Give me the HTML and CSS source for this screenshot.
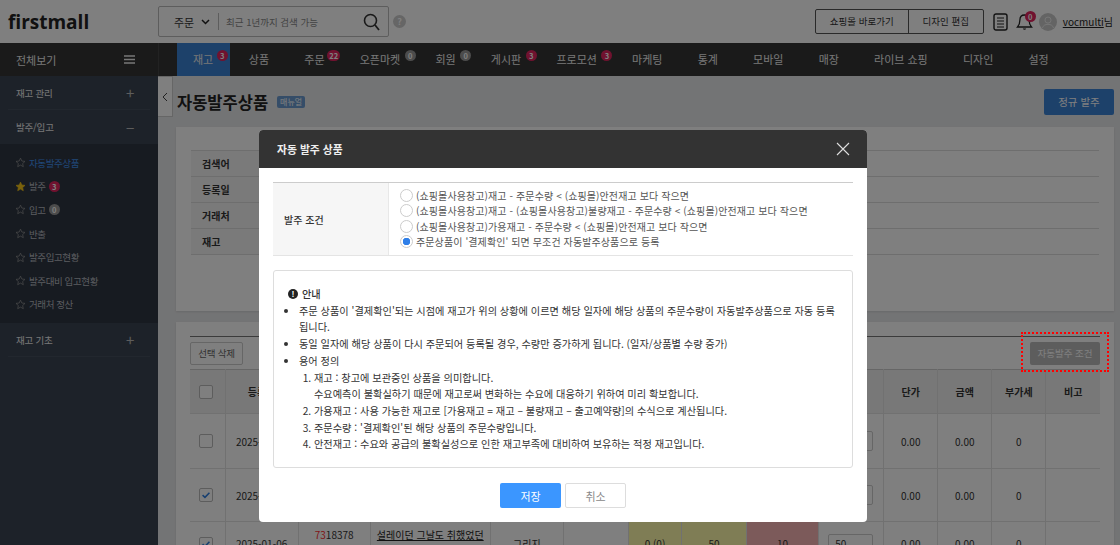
FILE: index.html
```html
<!DOCTYPE html>
<html lang="ko">
<head>
  <meta charset="utf-8">
  <title>자동발주상품</title>
  <link rel="stylesheet" href="styles.css">
</head>
<body>
  <svg class="defs" width="0" height="0">
    <symbol id="star" viewBox="0 0 24 24">
      <path d="M12 2.5l2.9 6.3 6.9.8-5.1 4.7 1.4 6.8-6.1-3.4-6.1 3.4 1.4-6.8-5.1-4.7 6.9-.8z"/>
    </symbol>
    <symbol id="tick" viewBox="0 0 14 14">
      <path d="M3 7.2l2.8 2.6L11 4.4" fill="none" stroke-width="1.8"/>
    </symbol>
  </svg>

  <div class="page">
    <header class="topbar">
      <a class="logo">firstmall</a>
      <div class="search">
        <span class="search-type">주문
          <svg width="9" height="6" viewBox="0 0 9 6"><path d="M1 1l3.5 3.5L8 1" fill="none" stroke="#222" stroke-width="1.5"/></svg>
        </span>
        <span class="search-text">최근 1년까지 검색 가능</span>
        <svg class="search-icon" width="17" height="18" viewBox="0 0 17 18"><circle cx="7.5" cy="7.5" r="6" fill="none" stroke="#333" stroke-width="1.6"/><path d="M12 12l4 5" stroke="#333" stroke-width="1.8"/></svg>
      </div>
      <span class="help">?</span>
      <div class="top-right">
        <div class="btn-pair">
          <a>쇼핑몰 바로가기</a>
          <a>디자인 편집</a>
        </div>
        <svg class="doc-icon" width="15" height="18" viewBox="0 0 15 18"><rect x="1" y="1" width="13" height="16" rx="2" fill="none" stroke="#222" stroke-width="1.4"/><path d="M4 5h7M4 8h7M4 11h7M4 14h7" stroke="#222" stroke-width="1.2"/></svg>
        <span class="bell">
          <svg width="17" height="20" viewBox="0 0 17 20"><path d="M8.5 3c-3 0-4.6 2.2-4.6 5 0 3.6-.9 5.300-2.400 7h14c-1.500-1.700-2.400-3.400-2.400-7 0-2.800-1.600-5-4.600-5z" fill="none" stroke="#222" stroke-width="1.300"/><path d="M6.800 16.500a1.800 1.800 0 0 0 3.400 0z" fill="#222"/></svg>
          <b class="count bell-count">0</b>
        </span>
        <svg class="avatar" width="18" height="18" viewBox="0 0 19 19"><circle cx="9.500" cy="9.500" r="9.500" fill="#c9c9c9"/><circle cx="9.500" cy="7.500" r="3.200" fill="none" stroke="#eee" stroke-width="1"/><path d="M3.500 16c1-3 3-4 6-4s5 1 6 4" fill="none" stroke="#eee" stroke-width="1"/></svg>
        <span class="user"><u>vocmulti</u>님</span>
      </div>
    </header>

    <nav class="navbar">
      <div class="nav-all">전체보기
        <svg width="11" height="9" viewBox="0 0 11 9"><path d="M0 1h11M0 4.500h11M0 8h11" stroke="#eee" stroke-width="1.300"/></svg>
      </div>
      <ul class="tabs">
        <li class="active">재고<b class="count">3</b></li>
        <li>상품</li>
        <li>주문<b class="count">22</b></li>
        <li>오픈마켓<b class="count zero">0</b></li>
        <li>회원<b class="count zero">0</b></li>
        <li>게시판<b class="count">3</b></li>
        <li>프로모션<b class="count">3</b></li>
        <li>마케팅</li>
        <li>통계</li>
        <li>모바일</li>
        <li>매장</li>
        <li>라이브 쇼핑</li>
        <li>디자인</li>
        <li>설정</li>
      </ul>
    </nav>

    <div class="main">
      <aside class="sidebar">
        <div class="side-head">재고 관리<span class="sign">+</span></div>
        <div class="side-head no-line">발주/입고<span class="sign">&minus;</span></div>
        <ul class="side-list">
          <li class="current"><svg class="star"><use href="#star"/></svg>자동발주상품</li>
          <li><svg class="star on"><use href="#star"/></svg>발주<b class="count">3</b></li>
          <li><svg class="star"><use href="#star"/></svg>입고<b class="count zero">0</b></li>
          <li><svg class="star"><use href="#star"/></svg>반출</li>
          <li><svg class="star"><use href="#star"/></svg>발주입고현황</li>
          <li><svg class="star"><use href="#star"/></svg>발주대비 입고현황</li>
          <li><svg class="star"><use href="#star"/></svg>거래처 정산</li>
        </ul>
        <div class="side-head">재고 기초<span class="sign">+</span></div>
      </aside>

      <section class="content">
        <span class="side-toggle">
          <svg width="6" height="10" viewBox="0 0 6 10"><path d="M5 1L1 5l4 4" fill="none" stroke="#444" stroke-width="1"/></svg>
        </span>
        <div class="title-row">
          <h1>자동발주상품</h1>
          <span class="manual">매뉴얼</span>
          <a class="btn-blue">정규 발주</a>
        </div>

        <div class="card search-card">
          <table class="search-table">
            <tr><th>검색어</th><td></td></tr>
            <tr><th>등록일</th><td></td></tr>
            <tr><th>거래처</th><td></td></tr>
            <tr><th>재고</th><td></td></tr>
          </table>
        </div>

        <div class="card list-card">
          <div class="list-tools">
            <a class="btn-line">선택 삭제</a>
            <a class="btn-gray">자동발주 조건</a>
          </div>
          <table class="list-table">
            <colgroup>
              <col class="c-check"><col class="c-date"><col class="c-code"><col class="c-name"><col class="c-opt"><col class="c-sup">
              <col class="c-stock"><col class="c-safe"><col class="c-short"><col class="c-qty">
              <col class="c-num"><col class="c-num"><col class="c-num"><col class="c-num">
            </colgroup>
            <thead>
              <tr>
                <th><span class="check"></span></th><th>등록일</th><th></th><th></th><th></th><th></th>
                <th></th><th></th><th></th><th></th><th>단가</th><th>금액</th><th>부가세</th><th>비고</th>
              </tr>
            </thead>
            <tbody>
              <tr class="row-a">
                <td><span class="check"></span></td><td>2025-01-06</td><td></td><td></td><td></td><td></td>
                <td></td><td></td><td></td><td><span class="qty"></span></td><td>0.00</td><td>0.00</td><td>0</td><td></td>
              </tr>
              <tr class="row-b">
                <td><span class="check"><svg class="tick"><use href="#tick"/></svg></span></td><td>2025-01-06</td><td></td><td></td><td></td><td></td>
                <td></td><td></td><td></td><td><span class="qty"></span></td><td>0.00</td><td>0.00</td><td>0</td><td></td>
              </tr>
              <tr class="row-c">
                <td><span class="check"><svg class="tick"><use href="#tick"/></svg></span></td>
                <td>2025-01-06</td>
                <td class="top-cell"><em>73</em>18378</td>
                <td class="top-cell"><u class="name">설레이던 그날도 취했었던</u></td>
                <td>그리지</td>
                <td></td>
                <td class="yellow">0 (0)</td>
                <td class="yellow">50</td>
                <td class="red">10</td>
                <td><span class="qty">50</span></td>
                <td>0.00</td><td>0.00</td><td>0</td><td></td>
              </tr>
            </tbody>
          </table>
        </div>
      </section>
    </div>

    <div class="overlay"></div>
    <div class="dot-box"></div>

    <div class="modal">
      <div class="modal-head">
        <h2>자동 발주 상품</h2>
        <svg width="14" height="14" viewBox="0 0 14 14"><path d="M1 1l12 12M13 1L1 13" stroke="#ddd" stroke-width="1.100"/></svg>
      </div>
      <div class="modal-body">
        <div class="cond">
          <div class="cond-label">발주 조건</div>
          <div class="cond-opts">
            <label><input type="radio" name="cond">(쇼핑몰사용창고)재고 - 주문수량 &lt; (쇼핑몰)안전재고 보다 작으면</label>
            <label><input type="radio" name="cond">(쇼핑몰사용창고)재고 - (쇼핑몰사용창고)불량재고 - 주문수량 &lt; (쇼핑몰)안전재고 보다 작으면</label>
            <label><input type="radio" name="cond">(쇼핑몰사용창고)가용재고 - 주문수량 &lt; (쇼핑몰)안전재고 보다 작으면</label>
            <label><input type="radio" name="cond" checked>주문상품이 '결제확인' 되면 무조건 자동발주상품으로 등록</label>
          </div>
        </div>
        <div class="notice">
          <div class="notice-title"><span class="excl">!</span>안내</div>
          <ul>
            <li>주문 상품이 '결제확인'되는 시점에 재고가 위의 상황에 이르면 해당 일자에 해당 상품의 주문수량이 자동발주상품으로 자동 등록 됩니다.</li>
            <li>동일 일자에 해당 상품이 다시 주문되어 등록될 경우, 수량만 증가하게 됩니다. (일자/상품별 수량 증가)</li>
            <li>용어 정의
              <ol>
                <li>재고 : 창고에 보관중인 상품을 의미합니다.<br>수요예측이 불확실하기 때문에 재고로써 변화하는 수요에 대응하기 위하여 미리 확보합니다.</li>
                <li>가용재고 : 사용 가능한 재고로 [가용재고 = 재고 – 불량재고 – 출고예약량]의 수식으로 계산됩니다.</li>
                <li>주문수량 : '결제확인'된 해당 상품의 주문수량입니다.</li>
                <li>안전재고 : 수요와 공급의 불확실성으로 인한 재고부족에 대비하여 보유하는 적정 재고입니다.</li>
              </ol>
            </li>
          </ul>
        </div>
        <div class="modal-btns">
          <button class="save">저장</button>
          <button class="cancel">취소</button>
        </div>
      </div>
    </div>
  </div>
</body>
</html>
```

FILE: styles.css
```css
* {
  box-sizing: border-box;
}

body {
  margin: 0;
  font-family: "Noto Sans CJK KR", "Noto Sans", sans-serif;
  font-size: 12px;
  color: #333;
  background-color: #e7e8ea;
}

ul, ol {
  margin: 0;
  padding: 0;
  list-style: none;
}

.defs {
  position: absolute;
}

.page {
  position: relative;
  width: 1120px;
  height: 545px;
  overflow: hidden;
}

/* top bar */
.topbar {
  display: flex;
  align-items: center;
  height: 43px;
  background-color: #fff;
}

.logo {
  width: 158px;
  padding-left: 8px;
  font-family: "Open Sans", sans-serif;
  font-size: 19px;
  font-weight: 700;
  color: #222;
}

.search {
  display: flex;
  align-items: center;
  width: 231px;
  height: 31px;
  border: 1px solid #bbb;
  border-radius: 2px;
}

.search-type {
  display: flex;
  align-items: center;
  gap: 7px;
  width: 60px;
  height: 17px;
  padding-left: 15px;
  border-right: 1px solid #bbb;
  font-size: 11px;
}

.search-text {
  flex: 1;
  padding-left: 7px;
  font-size: 9.500px;
  color: #888;
}

.search-icon {
  margin-right: 8px;
}

.help {
  width: 13px;
  height: 13px;
  margin-left: 4px;
  border-radius: 50%;
  background-color: #ccc;
  color: #fff;
  font-size: 9px;
  font-weight: 700;
  line-height: 13px;
  text-align: center;
}

.top-right {
  display: flex;
  align-items: center;
  margin-left: auto;
  padding-right: 7px;
}

.btn-pair {
  display: flex;
  height: 25px;
  border: 1px solid #555;
  border-radius: 2px;
  background-color: #fff;
}

.btn-pair a {
  width: 92px;
  font-size: 9.500px;
  line-height: 23px;
  text-align: center;
}

.btn-pair a + a {
  width: 75px;
  border-left: 1px solid #555;
}

.doc-icon {
  margin-left: 9px;
}

.bell {
  position: relative;
  display: flex;
  margin-left: 8px;
}

.bell-count {
  position: absolute;
  top: -1px;
  left: 9px;
}

.avatar {
  margin-left: 6px;
}

.user {
  margin-left: 6px;
  font-size: 10px;
  color: #222;
}

/* badge */
.count {
  display: inline-block;
  min-width: 11px;
  height: 11px;
  padding: 0 2px;
  border-radius: 6px;
  background-color: #e0245e;
  color: #fff;
  font-size: 7.500px;
  font-weight: 700;
  line-height: 11px;
  text-align: center;
}

.count.zero {
  background-color: #999;
}

/* main menu */
.navbar {
  display: flex;
  height: 33px;
  background-color: #343434;
  color: #eee;
}

.nav-all {
  display: flex;
  align-items: center;
  justify-content: space-between;
  width: 159px;
  padding: 0 23px 0 16px;
  border-right: 1px solid #444;
  font-size: 11px;
}

.tabs {
  display: flex;
  margin-left: 18px;
}

.tabs li {
  position: relative;
  padding: 0 17.600px;
  font-size: 11px;
  line-height: 33px;
}

.tabs li.active {
  margin-right: 1.500px;
  padding: 0 16.500px 0 16px;
  background-color: #3b82d4;
}

.tabs .count {
  position: absolute;
  top: 7px;
  right: 2px;
}

/* sidebar */
.main {
  display: flex;
  height: 469px;
}

.sidebar {
  flex: none;
  width: 158px;
  background-color: #3b4553;
  color: #eee;
}

.side-head {
  display: flex;
  align-items: center;
  justify-content: space-between;
  height: 34px;
  margin: 0 8px;
  padding: 0 0 0 8px;
  border-bottom: 1px solid #444e5d;
  font-size: 9.500px;
  letter-spacing: -0.200px;
}

.side-head.no-line {
  border-bottom: none;
}

.sign {
  width: 24px;
  font-size: 15px;
  color: #bbb;
}

.side-list {
  padding: 7px 0;
  background-color: #2f3743;
  color: #b4b8be;
}

.side-list li {
  display: flex;
  align-items: center;
  height: 23.600px;
  padding-left: 15px;
  font-size: 9.500px;
  letter-spacing: -0.400px;
}

.side-list .current {
  color: #3f8fee;
}

.side-list .count {
  margin-left: 3px;
  letter-spacing: 0;
}

.star {
  width: 11px;
  height: 11px;
  margin-right: 3px;
  fill: none;
  stroke: #999;
  stroke-width: 1.500;
}

.star.on {
  fill: #f5c518;
  stroke: #f5c518;
}

/* content */
.content {
  position: relative;
  flex: 1;
  min-width: 0;
  padding: 0 6px 0 18px;
}

.side-toggle {
  position: absolute;
  top: 0;
  left: 0;
  display: flex;
  align-items: center;
  justify-content: center;
  width: 15px;
  height: 41px;
  border: 1px solid #ccc;
  border-left: none;
  background-color: #fff;
}

.title-row {
  display: flex;
  align-items: center;
  height: 51px;
}

h1 {
  margin: 0 0 0 1px;
  font-size: 16.500px;
  font-weight: 700;
  color: #222;
}

.manual {
  margin-left: 9px;
  padding: 0 3px;
  border-radius: 2px;
  background-color: #6b9bd0;
  color: #fff;
  font-size: 8px;
  line-height: 12px;
}

.btn-blue {
  margin-left: auto;
  width: 70px;
  height: 26px;
  border-radius: 2px;
  background-color: #3b82d4;
  color: #fff;
  font-size: 10.500px;
  line-height: 26px;
  text-align: center;
}

.card {
  background-color: #fff;
  box-shadow: 0 1px 2px rgba(0, 0, 0, 0.1);
}

.search-card {
  height: 184px;
  padding: 23px 15px 0;
}

.search-table,
.list-table {
  width: 100%;
  border-collapse: collapse;
  font-size: 10px;
}

.search-table th {
  width: 68px;
  height: 26px;
  padding-left: 11px;
  border-top: 1px solid #ddd;
  border-bottom: 1px solid #ddd;
  background-color: #f4f4f4;
  text-align: left;
}

.search-table td {
  border-top: 1px solid #ddd;
  border-bottom: 1px solid #ddd;
}

.list-card {
  height: 230px;
  margin-top: 11px;
  padding: 14px 14px 0;
}

.list-tools {
  display: flex;
  justify-content: space-between;
  align-items: center;
  height: 33px;
  border-top: 1px solid #777;
}

.btn-line {
  width: 53px;
  height: 23px;
  border: 1px solid #ccc;
  border-radius: 2px;
  color: #666;
  font-size: 9.500px;
  letter-spacing: -0.200px;
  line-height: 21px;
  text-align: center;
}

.btn-gray {
  width: 70px;
  height: 23px;
  border-radius: 2px;
  background-color: #bbb;
  color: #fff;
  font-size: 9.500px;
  line-height: 23px;
  text-align: center;
}

.list-table {
  table-layout: fixed;
  border-top: 1px solid #ccc;
}

.c-check { width: 35px; }
.c-date { width: 73px; }
.c-code { width: 72px; }
.c-name { width: 120px; }
.c-opt { width: 73px; }
.c-sup { width: 65px; }
.c-stock { width: 53px; }
.c-safe { width: 65px; }
.c-short { width: 72px; }
.c-qty { width: 65px; }
.c-num { width: 54px; }

.list-table th,
.list-table td {
  padding: 0;
  border: 1px solid #e2e2e2;
  border-top: none;
  text-align: center;
  overflow: hidden;
  white-space: nowrap;
}

.list-table th {
  height: 44px;
  background-color: #f1f1f1;
}

.list-table th:first-child,
.list-table td:first-child {
  border-left: none;
}

.list-table th:last-child,
.list-table td:last-child {
  border-right: none;
}

.row-a td { height: 55px; }
.row-b td { height: 53px; }
.row-c td { height: 44px; }

.list-table .top-cell {
  padding-top: 5px;
  vertical-align: top;
}

.list-table em {
  font-style: normal;
  color: #ff3030;
}

.name {
  font-size: 10px;
  color: #222;
}

.yellow {
  background-color: #fffbaa;
}

.red {
  background-color: #f8b5b5;
}

.qty {
  display: block;
  width: 45px;
  height: 20px;
  margin-left: 9px;
  padding-left: 6px;
  border: 1px solid #ccc;
  border-radius: 2px;
  line-height: 18px;
  text-align: left;
}

.check {
  display: block;
  width: 14px;
  height: 14px;
  margin-left: 9px;
  border: 1px solid #bbb;
  border-radius: 2px;
  background-color: #fff;
}

.tick {
  display: block;
  width: 12px;
  height: 12px;
  stroke: #2f7fe0;
}

/* modal */
.overlay {
  position: absolute;
  top: 0;
  left: 0;
  width: 100%;
  height: 100%;
  background-color: rgba(0, 0, 0, 0.5);
}

.dot-box {
  position: absolute;
  top: 332px;
  left: 1021px;
  width: 88px;
  height: 40px;
  border: 2px dotted #f00;
}

.modal {
  position: absolute;
  top: 130px;
  left: 259px;
  width: 608px;
  height: 392px;
  border-radius: 4px;
  background-color: #fff;
  overflow: hidden;
}

.modal-head {
  display: flex;
  align-items: center;
  justify-content: space-between;
  height: 38px;
  padding: 0 17px 0 18px;
  background-color: #333;
}

.modal-head h2 {
  margin: 0;
  color: #eee;
  font-size: 10.800px;
  font-weight: 700;
}

.modal-body {
  padding: 14px 14px 0;
}

.cond {
  display: flex;
  height: 74px;
  border-top: 1px solid #ccc;
  border-bottom: 1px solid #e4e4e4;
}

.cond-label {
  display: flex;
  align-items: center;
  width: 116px;
  padding-left: 11px;
  border-right: 1px solid #e8e8e8;
  background-color: #f6f6f6;
  font-size: 10px;
  font-weight: 500;
}

.cond-opts {
  display: flex;
  flex-direction: column;
  justify-content: center;
  padding-left: 11px;
  padding-bottom: 1px;
}

.cond-opts label {
  display: flex;
  align-items: center;
  height: 15.300px;
  font-size: 10px;
  letter-spacing: 0.100px;
  color: #555;
}

.cond-opts input {
  appearance: none;
  width: 13px;
  height: 13px;
  margin: 0 3px 0 0;
  border: 1px solid #ccc;
  border-radius: 50%;
  background-color: #fff;
}

.cond-opts input:checked {
  border-color: #ccc;
  background: radial-gradient(circle, #2f7fe8 0 3.500px, #fff 4px);
}

.notice {
  height: 198px;
  margin-top: 14px;
  padding: 15px 14px 0;
  border: 1px solid #ddd;
  border-radius: 3px;
  font-size: 10.200px;
  line-height: 16.700px;
  color: #333;
}

.notice-title {
  display: flex;
  align-items: center;
  font-weight: 500;
}

.excl {
  width: 10px;
  height: 10px;
  margin-right: 4px;
  border-radius: 50%;
  background-color: #222;
  color: #fff;
  font-size: 8px;
  font-weight: 700;
  line-height: 10px;
  text-align: center;
}

.notice ul {
  padding-left: 11px;
  list-style: disc;
}

.notice ol {
  padding-left: 15px;
  list-style: decimal;
}

.modal-btns {
  display: flex;
  justify-content: center;
  gap: 4px;
  margin-top: 15px;
}

.modal-btns button {
  width: 61px;
  height: 25px;
  padding: 0;
  border-radius: 2px;
  font-family: inherit;
  font-size: 11px;
}

.save {
  border: none;
  background-color: #3b96ff;
  color: #fff;
}

.cancel {
  border: 1px solid #ddd;
  background-color: #fff;
  color: #888;
}
```
